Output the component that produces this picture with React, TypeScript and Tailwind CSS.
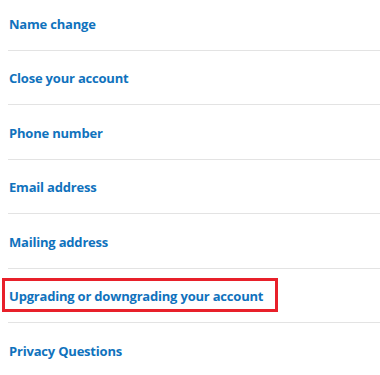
import React from 'react';

const items = [
  'Name change',
  'Close your account',
  'Phone number',
  'Email address',
  'Mailing address',
  'Upgrading or downgrading your account',
  'Privacy Questions',
];

const App: React.FC = () => {
  return (
    <div className="w-[380px] h-[375px] overflow-hidden bg-white" style={{ fontFamily: '"Open Sans", "Liberation Sans", sans-serif' }}>
      <div className="-mt-[3.4px] pl-2">
        {items.map((label, i) => (
          <div
            key={label}
            className={`relative flex items-center pt-[3px] h-[54.4px] ${i < items.length - 1 ? 'border-b border-[#e3e3e3]' : ''}`}
          >
            {/* highlighted row */}
            {i === 5 && (
              <div className="absolute left-[-6px] top-[9px] w-[276px] h-[34px] border-[3.5px] border-[#e8202a]" />
            )}
            <a href="#" className="relative pl-px text-[13px] font-bold text-[#1072bd] tracking-[-0.2px]">
              {label}
            </a>
          </div>
        ))}
      </div>
    </div>
  );
};

export default App;
